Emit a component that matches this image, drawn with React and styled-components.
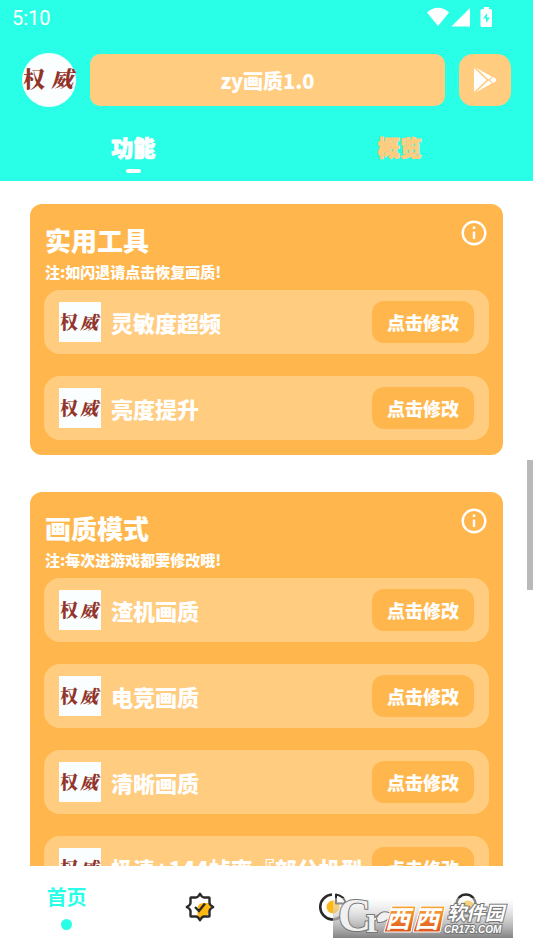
import React from 'react';
import styled, { createGlobalStyle } from 'styled-components';

const Colors = {
  teal: '#29ffe6',
  orange: '#ffb74d',
  peach: '#ffcc80',
  white: '#ffffff',
  seal: '#93342b',
  ink: '#2b2a29',
  amber: '#fdb813',
};

const sections = [
  {
    title: '实用工具',
    note: '注:如闪退请点击恢复画质!',
    items: ['灵敏度超频', '亮度提升'],
  },
  {
    title: '画质模式',
    note: '注:每次进游戏都要修改哦!',
    items: ['渣机画质', '电竞画质', '清晰画质', '极清+144帧率『部分机型'],
  },
];

function StatusIcons() {
  return (
    <svg width="68" height="22" viewBox="0 0 68 22" fill="#fff" aria-hidden="true">
      <path d="M0 5.500C6.500-.8 16-.8 22 5.500L11 19z" />
      <path d="M43 1v18.500H24.500z" />
      <path d="M57 0h5v2h1.500q1.500 0 1.500 1.500v15q0 1.500-1.500 1.500h-8.500q-1.500 0-1.500-1.500v-15q0-1.500 1.500-1.500H57z" />
      <path d="M60 6l-4 5.500h3v4.500l4-5.500h-3z" fill={Colors.teal} />
    </svg>
  );
}

function PlayIcon() {
  return (
    <svg width="24" height="26" viewBox="0 0 24 26" fill="#fff" aria-hidden="true">
      <path d="M1 1v24l12.500-12z" />
      <path d="M3 .8l16 9-3.500 2.700z" />
      <path d="M3 25.200l16-9-3.500-2.700z" />
      <path d="M17 13l3-3q3.500 1.500 3.500 3t-3.500 3z" />
    </svg>
  );
}

function InfoIcon() {
  return (
    <svg width="26" height="26" viewBox="0 0 26 26" fill="none" stroke="#fff" aria-hidden="true">
      <circle cx="13" cy="13" r="11.300" strokeWidth="2.400" />
      <path d="M13 11.500v7.500M13 6.500v2.500" strokeWidth="2.400" />
    </svg>
  );
}

function VerifiedIcon() {
  return (
    <svg width="30" height="30" viewBox="0 0 30 30" fill="none" aria-hidden="true">
      <path d="M12.500 17q0-6 6-6h5q2 0 2 3v3l-3 6-5 3h-5z" fill={Colors.amber} />
      <path
        d="M15 1.800q2 3.700 4 3.700h5q.5 0 .5.500v5q0 2 3.700 4-3.700 2-3.700 4v5q0 .5-.5.500h-5q-2 0-4 3.700-2-3.700-4-3.700h-5q-.5 0-.5-.500v-5q0-2-3.700-4 3.700-2 3.700-4v-5q0-.5.5-.5h5q2 0 4-3.700z"
        stroke={Colors.ink}
        strokeWidth="2.400"
        strokeLinejoin="round"
      />
      <path d="M10 15l4 4 6-7.500" stroke={Colors.ink} strokeWidth="2.400" />
    </svg>
  );
}

function ChartIcon() {
  return (
    <svg width="30" height="30" viewBox="0 0 30 30" fill="none" aria-hidden="true">
      <circle cx="15" cy="15" r="6.500" fill={Colors.amber} />
      <path d="M14 2.500a12.500 12.500 0 1 0 13 15" stroke={Colors.ink} strokeWidth="2.600" />
      <path d="M18 2.500v9h9.500q-1-7.500-9.500-9z" fill="#fff" stroke={Colors.ink} strokeWidth="2" strokeLinejoin="round" />
    </svg>
  );
}

function ProfileIcon() {
  return (
    <svg width="30" height="30" viewBox="0 0 30 30" fill="none" aria-hidden="true">
      <circle cx="17" cy="15" r="6.500" fill={Colors.amber} />
      <circle cx="15" cy="12" r="9.500" stroke={Colors.ink} strokeWidth="2.400" />
      <path d="M5 22q10 9 20 0" stroke={Colors.ink} strokeWidth="2.400" />
    </svg>
  );
}

function SiteBadge() {
  return (
    <svg width="180" height="40" viewBox="0 0 180 40" overflow="visible" role="img" aria-label="西西软件园 CR173.COM">
      <defs>
        <linearGradient id="badgeBack" x1="0" y1="0" x2="0" y2="1">
          <stop offset="0" stopColor="#fff" stopOpacity="0.4" />
          <stop offset="1" stopColor="#828282" />
        </linearGradient>
        <linearGradient id="badgeTile" x1="0" y1="0" x2="0" y2="1">
          <stop offset="0" stopColor="#f9a83a" />
          <stop offset="1" stopColor="#e1541c" />
        </linearGradient>
      </defs>
      <rect width="180" height="40" fill="url(#badgeBack)" />
      <g fill="#f0f0f0" stroke="#777" strokeWidth="2" paintOrder="stroke" fontFamily="Liberation Serif, serif">
        <text x="5" y="33" fontSize="46">C</text>
        <text x="33" y="34" fontSize="36" fontWeight="bold">r</text>
        <path d="M44 20q5-9 14-4-5 9-13 8z" strokeWidth="2" />
      </g>
      <path
        d="M59 8h24l-5 26H51zM88 8h24l-5 26H80z"
        fill="url(#badgeTile)"
        stroke="#fff"
        strokeLinejoin="round"
      />
      <g fill="#fff" fontFamily="Noto Sans CJK SC, sans-serif" fontWeight="700" fontStyle="italic">
        <text x="52" y="30" fontSize="25">西</text>
        <text x="81" y="30" fontSize="25">西</text>
        <g stroke="#777" strokeWidth="2" paintOrder="stroke" fontSize="19">
          <text x="114" y="22">软件园</text>
        </g>
      </g>
      <text x="111" y="35" fontSize="10" fontFamily="Liberation Sans, sans-serif" fontWeight="bold" fontStyle="italic" fill="#fff" stroke="#777" strokeWidth="2" paintOrder="stroke">
        CR173.COM
      </text>
    </svg>
  );
}

function Section({ title, note, items }) {
  return (
    <Card>
      <CardHead>
        <div>
          <CardTitle>{title}</CardTitle>
          <CardNote>{note}</CardNote>
        </div>
        <IconButton aria-label={title}>
          <InfoIcon />
        </IconButton>
      </CardHead>
      <Rows>
        {items.map((name) => (
          <Row key={name}>
            <Seal>
              <span>权</span>
              <span>威</span>
            </Seal>
            <RowName>{name}</RowName>
            <ActionButton>点击修改</ActionButton>
          </Row>
        ))}
      </Rows>
    </Card>
  );
}

function App() {
  return (
    <Screen>
      <GlobalStyle />
      <Header>
        <StatusBar>
          <span>5:10</span>
          <StatusIcons />
        </StatusBar>
        <TitleRow>
          <Seal $round>
            <span>权</span>
            <span>威</span>
          </Seal>
          <AppTitle>zy画质1.0</AppTitle>
          <PlayButton aria-label="Play">
            <PlayIcon />
          </PlayButton>
        </TitleRow>
        <Tabs>
          <Tab $active>功能</Tab>
          <Tab>概览</Tab>
        </Tabs>
      </Header>
      <Content>
        {sections.map((section) => (
          <Section key={section.title} {...section} />
        ))}
        <ScrollThumb />
      </Content>
      <BottomNav>
        <NavItem href="#home" $active>
          首页
        </NavItem>
        <NavItem href="#verified" aria-label="verified">
          <VerifiedIcon />
        </NavItem>
        <NavItem href="#stats" aria-label="stats">
          <ChartIcon />
        </NavItem>
        <NavItem href="#profile" aria-label="profile">
          <ProfileIcon />
        </NavItem>
        <BadgeHolder>
          <SiteBadge />
        </BadgeHolder>
      </BottomNav>
    </Screen>
  );
}

const GlobalStyle = createGlobalStyle`
  * {
    box-sizing: border-box;
  }

  body {
    margin: 0;
    background: ${Colors.white};
    font-family: "Noto Sans CJK SC", sans-serif;
    font-weight: 900;
    color: ${Colors.white};
  }

  button {
    border: 0;
    padding: 0;
    font: inherit;
    color: inherit;
    cursor: pointer;
  }
`;

const Screen = styled.div`
  height: 100vh;
  display: flex;
  flex-direction: column;
  overflow: hidden;
`;

const Header = styled.header`
  flex: none;
  background: ${Colors.teal};
`;

const StatusBar = styled.div`
  display: flex;
  align-items: center;
  justify-content: space-between;
  height: 36px;
  padding: 0 38px 0 12px;
  font-family: Roboto, sans-serif;
  font-size: 20px;
  font-weight: 400;
`;

const TitleRow = styled.div`
  display: flex;
  align-items: center;
  gap: 14px;
  padding: 17px 22px 0;
`;

const Seal = styled.div`
  flex: none;
  display: flex;
  align-items: flex-start;
  justify-content: space-between;
  width: ${(p) => (p.$round ? 54 : 42)}px;
  height: ${(p) => (p.$round ? 54 : 40)}px;
  padding: ${(p) => (p.$round ? '14px 3px 0 1px' : '10px 3px 0 1px')};
  border-radius: ${(p) => (p.$round ? '50%' : '0')};
  background: #fafefe;
  color: ${Colors.seal};
  font-family: "Noto Serif CJK SC", "Noto Sans CJK SC", serif;
  font-size: ${(p) => (p.$round ? 22 : 18)}px;
  font-weight: 900;
  line-height: 1;

  span:last-child {
    font-style: italic;
  }
`;

const AppTitle = styled.h1`
  flex: 1;
  margin: 0;
  padding-top: 2px;
  border-radius: 10px;
  background: ${Colors.peach};
  font-size: 20px;
  font-weight: 900;
  line-height: 50px;
  text-align: center;
`;

const PlayButton = styled.button`
  display: flex;
  align-items: center;
  justify-content: center;
  width: 52px;
  height: 52px;
  border-radius: 14px;
  background: ${Colors.peach};
`;

const Tabs = styled.div`
  display: flex;
  padding: 22px 0 8px;
`;

const Tab = styled.button`
  flex: 1;
  display: flex;
  flex-direction: column;
  align-items: center;
  gap: 6px;
  background: none;
  color: ${(p) => (p.$active ? Colors.white : Colors.peach)};
  -webkit-text-stroke: 1px;
  font-size: 22px;
  line-height: 34px;

  &::after {
    content: '';
    width: 15px;
    height: 4px;
    border-radius: 2px;
    background: ${(p) => (p.$active ? Colors.white : 'transparent')};
  }
`;

const Content = styled.main`
  position: relative;
  flex: 1;
  min-height: 0;
  overflow: hidden;
  display: flex;
  flex-direction: column;
  gap: 37px;
  padding: 23px 30px 0;
`;

const Card = styled.section`
  flex: none;
  padding: 16px 14px 15px;
  border-radius: 12px;
  background: ${Colors.orange};
`;

const CardHead = styled.div`
  display: flex;
  align-items: flex-start;
  justify-content: space-between;
  padding: 0 2px 0 1px;
`;

const CardTitle = styled.h2`
  margin: 0;
  font-size: 26px;
  font-weight: 900;
  line-height: 40px;
`;

const CardNote = styled.p`
  margin: 0;
  font-size: 15px;
  line-height: 24px;
`;

const IconButton = styled.button`
  display: flex;
  background: none;
`;

const Rows = styled.div`
  display: flex;
  flex-direction: column;
  gap: 22px;
  padding-top: 6px;
`;

const Row = styled.div`
  display: flex;
  align-items: center;
  gap: 10px;
  height: 64px;
  padding: 0 15px;
  border-radius: 16px;
  background: ${Colors.peach};
`;

const RowName = styled.span`
  flex: 1;
  min-width: 0;
  overflow: hidden;
  white-space: nowrap;
  font-size: 22px;
  line-height: 32px;
`;

const ActionButton = styled.button`
  flex: none;
  padding: 0 15px;
  border-radius: 12px;
  background: ${Colors.orange};
  font-size: 18px;
  line-height: 42px;
`;

const ScrollThumb = styled.div`
  position: absolute;
  top: 279px;
  right: 0;
  width: 6px;
  height: 130px;
  background: #b9b9b9;
`;

const BottomNav = styled.nav`
  position: relative;
  flex: none;
  display: flex;
  height: 82px;
  background: ${Colors.white};
`;

const NavItem = styled.a`
  flex: 1;
  display: flex;
  flex-direction: column;
  align-items: center;
  justify-content: center;
  gap: 10px;
  color: ${Colors.teal};
  font-size: 20px;
  font-weight: 700;
  line-height: 24px;
  text-decoration: none;

  &::after {
    content: '';
    display: ${(p) => (p.$active ? 'block' : 'none')};
    width: 11px;
    height: 11px;
    border-radius: 50%;
    background: ${Colors.teal};
  }
`;

const BadgeHolder = styled.div`
  position: absolute;
  right: 20px;
  bottom: 10px;
  display: flex;
`;

export default App;
